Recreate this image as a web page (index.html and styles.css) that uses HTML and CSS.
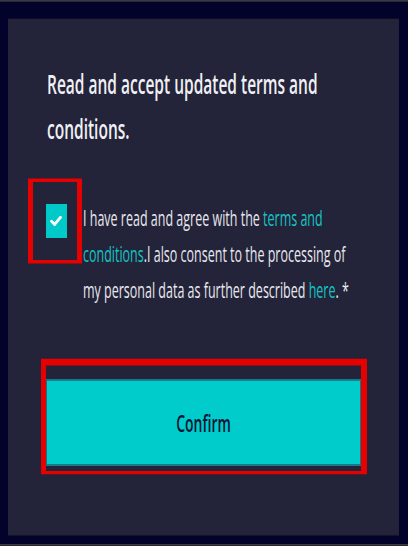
FILE: index.html
```html
<!DOCTYPE html>
<html lang="en">
<head>
<meta charset="utf-8">
<title>Terms</title>
<link rel="stylesheet" href="styles.css">
</head>
<body>
<div class="viewport">
  <div class="stage">
    <section class="panel">
      <h1 class="title">Read and accept updated terms and conditions.</h1>
      <div class="consent">
        <div class="check-mark-frame">
          <span class="checkbox">
            <svg class="tick" viewBox="0 0 10 8" preserveAspectRatio="none" aria-hidden="true">
              <path d="M1.3 4.3 L3.9 6.8 L8.7 1.2" fill="none" stroke="#ffffff" stroke-width="2.4" stroke-linecap="round" stroke-linejoin="round"/>
            </svg>
          </span>
        </div>
        <p class="consent-text">I have read and agree with the <a class="link" href="#">terms and conditions</a>.I also consent to the processing of my personal data as further described <a class="link" href="#">here</a>. *</p>
      </div>
      <div class="confirm-frame">
        <button class="confirm" type="button">Confirm</button>
      </div>
    </section>
  </div>
</div>
</body>
</html>
```
FILE: styles.css
```css
:root {
  --k: 1.7;
}

html, body {
  margin: 0;
  padding: 0;
  background: #03022a;
}

.viewport {
  width: 408px;
  height: 546px;
  overflow: hidden;
}

.stage {
  width: 408px;
  height: calc(546px / var(--k));
  box-sizing: border-box;
  border-top: 1px solid #3a3a40;
  border-bottom: 1px solid #3a3a40;
  background: #03022a;
  transform: scaleY(var(--k));
  transform-origin: 0 0;
  display: flex;
  flex-direction: column;
  font-family: "Open Sans", "Noto Sans", sans-serif;
}

.panel {
  margin: calc(17px / var(--k)) 9px 0 8px;
  height: calc(516px / var(--k));
  flex: none;
  background: #232339;
  padding-left: 20px;
  box-sizing: border-box;
  display: flex;
  flex-direction: column;
  align-items: flex-start;
}

.title {
  margin: 0 0 calc(16px / var(--k) + 0.388em) 19px;
  padding-top: calc(52px / var(--k) - 0.388em);
  font-size: 15.5px;
  line-height: calc(46px / var(--k));
  font-weight: 600;
  color: #f0f0f4;
  width: 310px;
}

.consent {
  display: flex;
  align-items: flex-start;
}

.check-mark-frame {
  width: 54px;
  height: calc(85px / var(--k));
  box-sizing: border-box;
  border-style: solid;
  border-color: #e60000;
  border-width: calc(5px / var(--k)) 5px;
  display: flex;
  align-items: center;
  justify-content: center;
  padding-left: 2px;
}

.checkbox {
  width: 21px;
  height: calc(35px / var(--k));
  background: #00c9c9;
  display: flex;
  align-items: center;
  justify-content: center;
}

.tick {
  width: 12px;
  height: calc(10px / var(--k));
  display: block;
}

.consent-text {
  margin: calc(32.5px / var(--k) - 0.388em) 0 calc(42.5px / var(--k) + 0.388em) 1px;
  width: 278px;
  font-size: 12.5px;
  line-height: calc(35px / var(--k));
  color: #e8e8ee;
}

.link {
  color: #16c4c4;
  text-decoration: none;
}

.confirm-frame {
  margin-left: 13px;
  width: 326px;
  box-sizing: border-box;
  border-style: solid;
  border-color: #e60000;
  border-width: calc(7px / var(--k)) 6px calc(5px / var(--k)) 5px;
  padding: calc(14px / var(--k)) 0 calc(5px / var(--k));
}

.confirm {
  display: block;
  width: 100%;
  height: calc(86px / var(--k));
  margin: 0;
  padding: 0;
  border: 1px solid #1f7080;
  background: #00cccc;
  color: #0a1433;
  font-family: inherit;
  font-size: 14px;
  font-weight: 600;
  cursor: pointer;
}
```
